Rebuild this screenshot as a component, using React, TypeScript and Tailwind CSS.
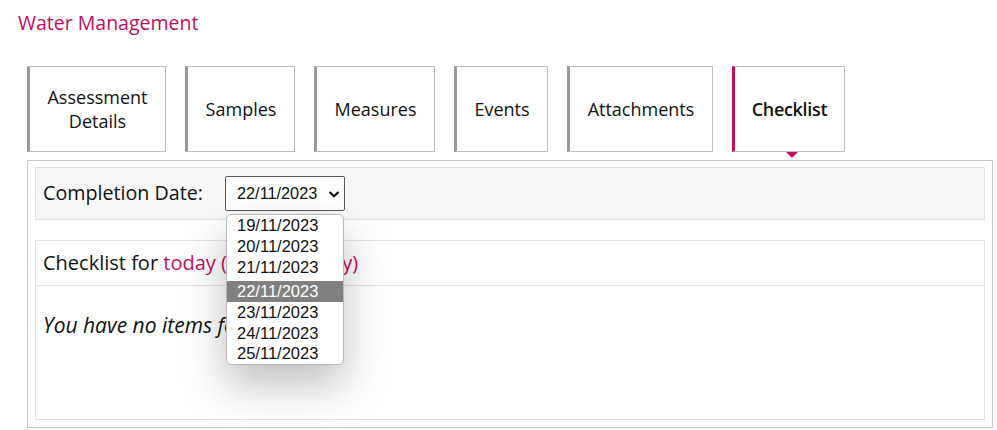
import React from "react";

const tabs = [
  { label: "Assessment Details", w: 139 },
  { label: "Samples", w: 110 },
  { label: "Measures", w: 121 },
  { label: "Events", w: 94 },
  { label: "Attachments", w: 146 },
  { label: "Checklist", w: 113, active: true },
];

const dates = [
  { d: "19/11/2023", cls: "h-[21px]" },
  { d: "20/11/2023", cls: "h-[21px]" },
  { d: "21/11/2023", cls: "h-[21px]" },
  { d: "22/11/2023", cls: "h-[21px] mt-[3px] bg-[#808080] text-white" },
  { d: "23/11/2023", cls: "h-[20.5px]" },
  { d: "24/11/2023", cls: "h-[20.5px]" },
  { d: "25/11/2023", cls: "h-[20.5px]" },
];

export default function App() {
  return (
    <div
      className="w-[997px] h-[430px] bg-white text-[#111] overflow-hidden"
      style={{ fontFamily: '"Open Sans", "Noto Sans", sans-serif' }}
    >
      <div className="pl-[18px] pt-[9px] h-[66px]">
        <h1 className="text-[19.5px] leading-[28px] text-[#c2105c]">Water Management</h1>
      </div>

      <div className="flex gap-[19px] pl-[27px] h-[86px]">
        {tabs.map((t) => (
          <div
            key={t.label}
            className={
              "relative flex items-center justify-center text-center h-[86px] border border-[#bdbdbd] border-l-[3px] leading-[24px] px-[14px] " +
              (t.active
                ? "border-l-[#c2105c] font-semibold text-[18px] tracking-[-0.3px]"
                : "border-l-[#999999] text-[18px]")
            }
            style={{ width: t.w }}
          >
            <span>{t.label}</span>
            {t.active && (
              <div className="absolute left-[51px] top-[85px] w-0 h-0 border-l-[6px] border-r-[6px] border-t-[6px] border-l-transparent border-r-transparent border-t-[#c2105c]" />
            )}
          </div>
        ))}
      </div>

      <div className="ml-[27px] mt-[8px] w-[966px] h-[268px] border border-[#c8c8c8] px-[7px] pt-[6px] pb-[7px] flex flex-col">
        <div className="h-[53px] bg-[#f7f7f7] border border-[#e3e3e3] flex items-center pl-[7px]">
          <span className="text-[19.7px] leading-[26px] w-[182px] -mt-[2px]">Completion Date:</span>
          <div className="relative">
            <div
              className="w-[120px] h-[35px] border border-[#595959] rounded-[2px] bg-white flex items-center pl-[11px] pr-[4px] justify-between"
              style={{ fontFamily: '"Liberation Sans", Arial, sans-serif' }}
            >
              <span className="text-[16.3px]">22/11/2023</span>
              <svg width="12" height="10" viewBox="0 0 12 10">
                <path d="M1.5 3 L6 7.2 L10.5 3" fill="none" stroke="#111" strokeWidth="2.2" />
              </svg>
            </div>
            <div
              className="absolute z-10 left-[1px] top-[38px] w-[118px] h-[151px] bg-white border border-[#b8b8b8] rounded-[5px] shadow-[0_20px_44px_rgba(0,0,0,0.26)] overflow-hidden"
              style={{ fontFamily: '"Liberation Sans", Arial, sans-serif' }}
            >
              {dates.map((it) => (
                <div
                  key={it.d}
                  className={"text-[16.5px] leading-[20px] pl-[10px] text-[#111] " + it.cls}
                >
                  {it.d}
                </div>
              ))}
            </div>
          </div>
        </div>

        <div className="mt-[20px] flex-1 border border-[#e3e3e3] flex flex-col">
          <div className="h-[45px] border-b border-[#e3e3e3] flex items-center pl-[7px] text-[20px]">
            <span className="whitespace-nowrap">
              Checklist for{" "}
              <span className="text-[#c2105c]">
                today <span className="tracking-[1.9px]">(Wednesda</span>y)
              </span>
            </span>
          </div>
          <div className="pl-[7px] pt-[24px] italic text-[21px]">You have no items for today.</div>
        </div>
      </div>
    </div>
  );
}
